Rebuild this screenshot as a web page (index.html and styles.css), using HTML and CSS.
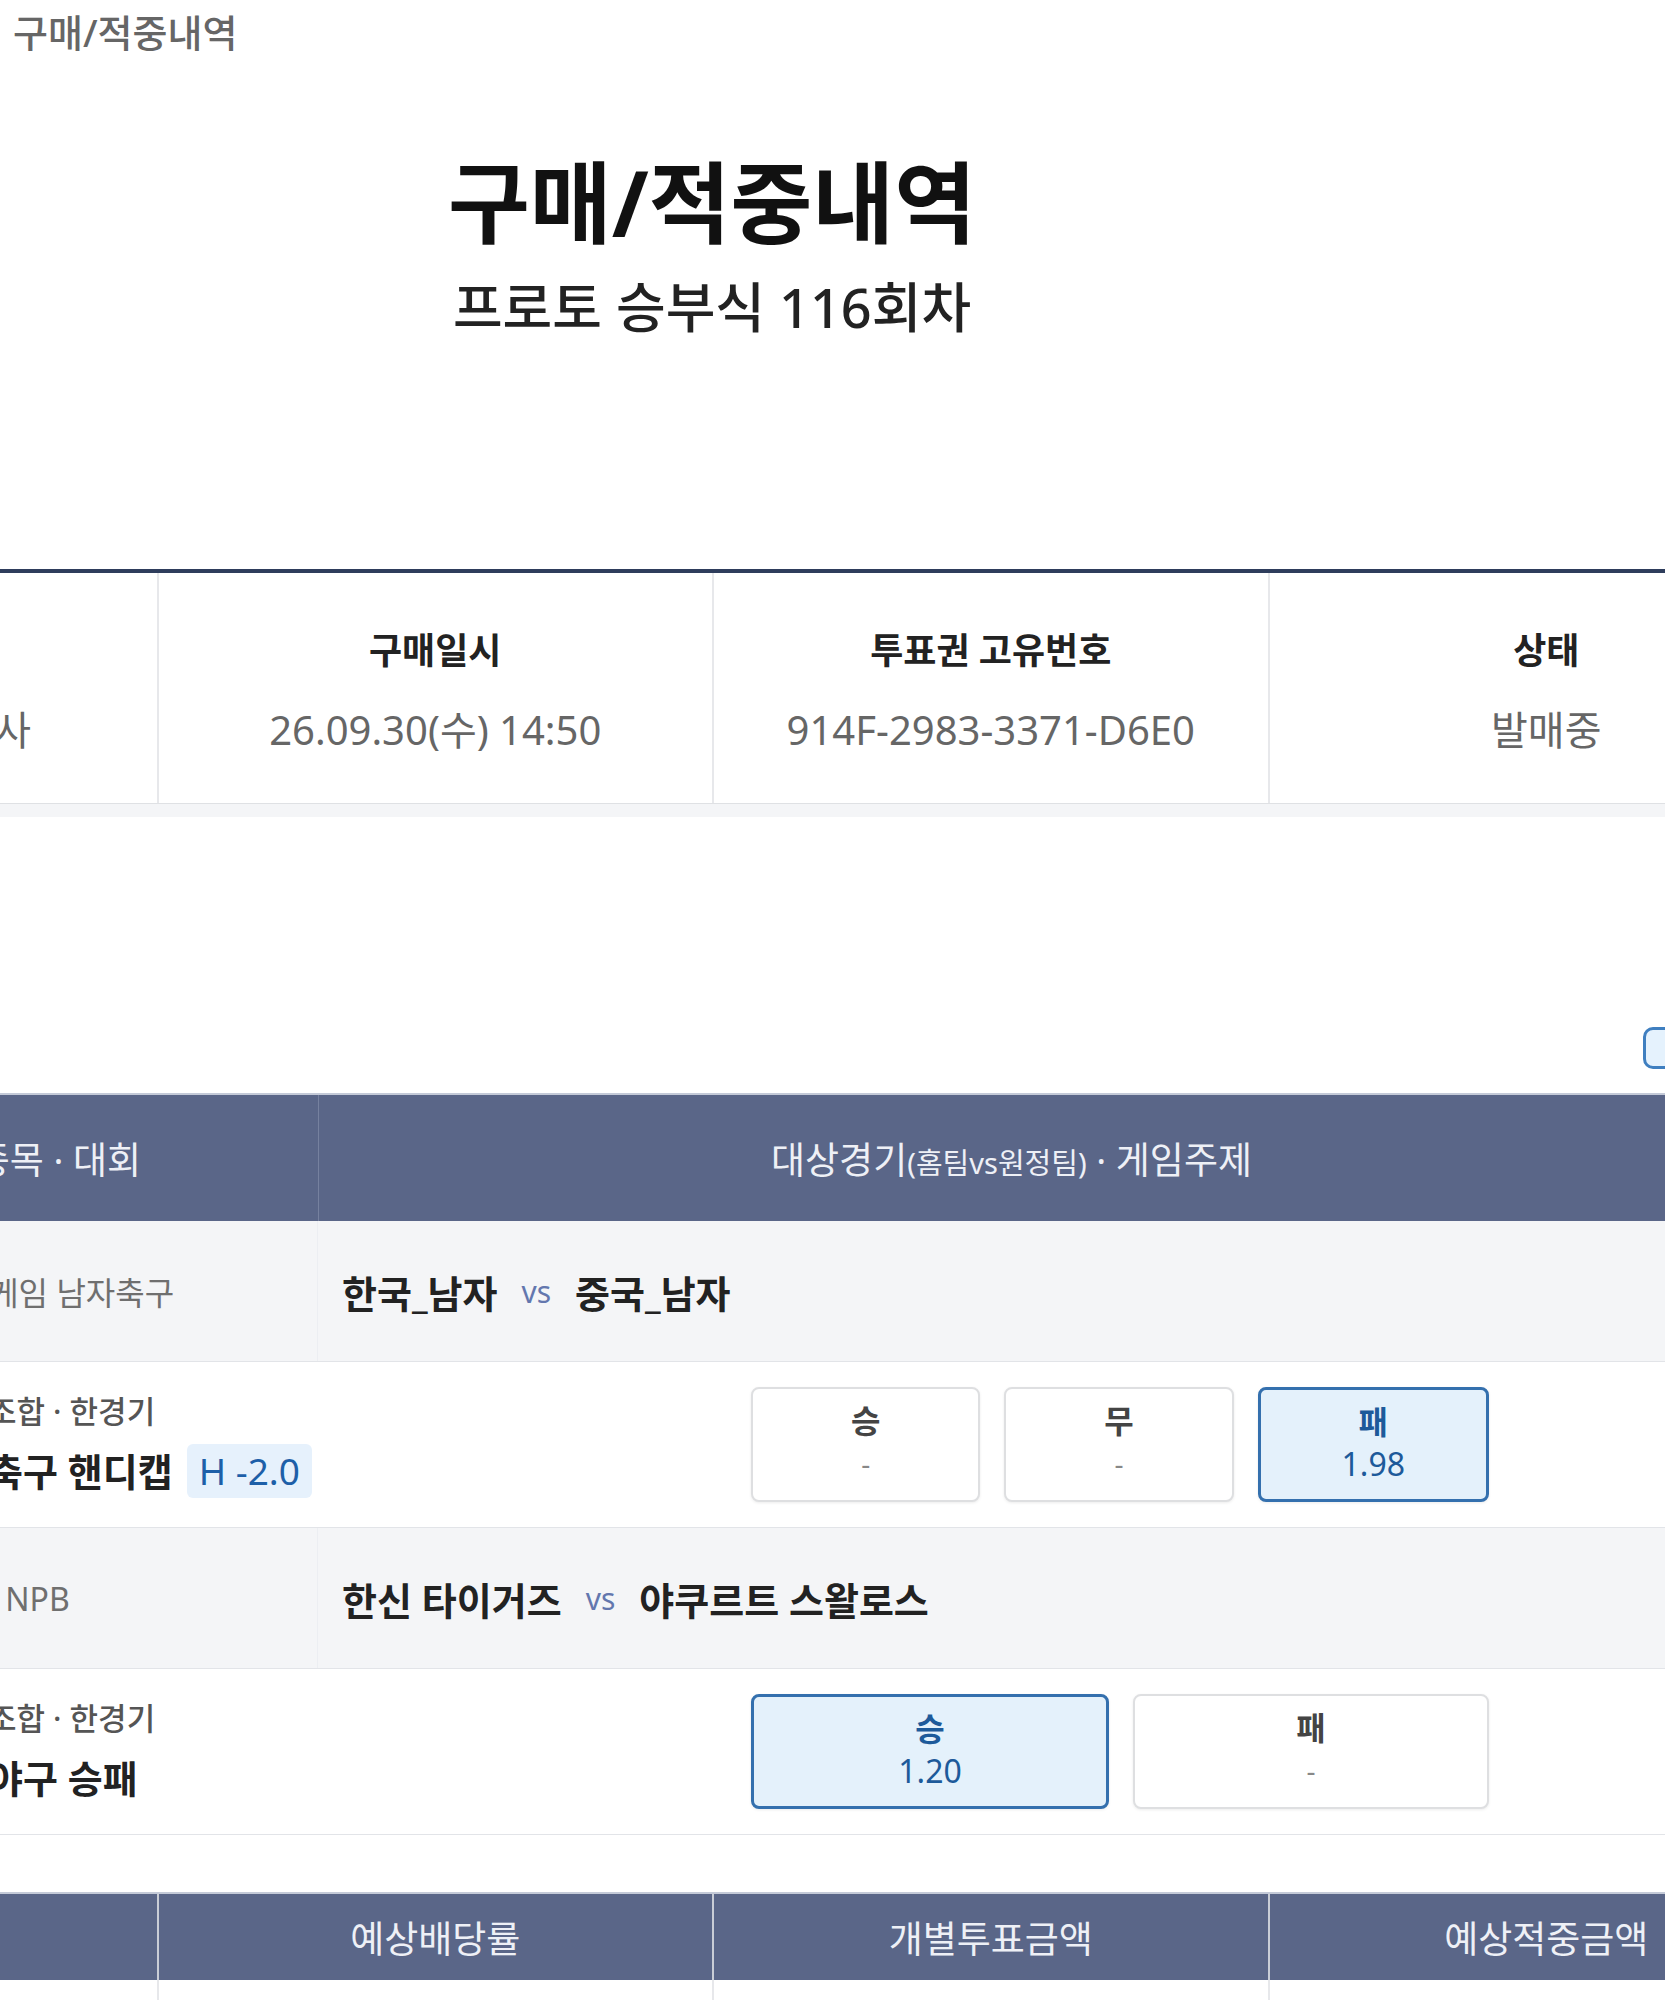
FILE: index.html
```html
<!DOCTYPE html>
<html lang="ko">
<head>
  <meta charset="UTF-8" />
  <meta name="viewport" content="width=device-width, initial-scale=1.0" />
  <title>구매/적중내역</title>
  <link rel="stylesheet" href="styles.css">
</head>
<body>
  <div class="crumb">구매/적중내역</div>

  <div class="wrap">
    <header class="head">
      <h1>구매/적중내역</h1>
      <p class="round">프로토 승부식 116회차</p>
    </header>

    <!-- ticket summary -->
    <div class="summary">
      <div class="cell">
        <strong>구매처</strong>
        <span>온라인 판매대행사</span>
      </div>
      <div class="cell">
        <strong>구매일시</strong>
        <span>26.09.30(수) 14:50</span>
      </div>
      <div class="cell">
        <strong>투표권 고유번호</strong>
        <span>914F-2983-3371-D6E0</span>
      </div>
      <div class="cell">
        <strong>상태</strong>
        <span>발매중</span>
      </div>
    </div>
    <div class="band"></div>

    <div class="tools">
      <button class="btn-mini">전체보기</button>
    </div>

    <!-- picked games -->
    <div class="games">
      <div class="games-head">
        <div><span>번호</span></div>
        <div class="col-league"><span>종목 · 대회</span></div>
        <div><span>대상경기<small>(홈팀vs원정팀)</small> · 게임주제</span></div>
        <div><span>마감</span></div>
      </div>

      <div class="match">
        <div class="no">1</div>
        <div class="league">아시안게임 남자축구</div>
        <div class="teams">
          <b>한국_남자</b><em>vs</em><b>중국_남자</b>
        </div>
        <div></div>
      </div>
      <div class="detail">
        <div></div>
        <div class="info">
          <span class="type">조합 · 한경기</span>
          <span class="name">축구 핸디캡 <i class="tag">H -2.0</i></span>
        </div>
        <div class="picks">
          <div class="pick"><b>승</b><span>-</span></div>
          <div class="pick"><b>무</b><span>-</span></div>
          <div class="pick on"><b>패</b><span>1.98</span></div>
        </div>
        <div></div>
      </div>

      <div class="match">
        <div class="no">2</div>
        <div class="league">NPB</div>
        <div class="teams">
          <b>한신 타이거즈</b><em>vs</em><b>야쿠르트 스왈로스</b>
        </div>
        <div></div>
      </div>
      <div class="detail">
        <div></div>
        <div class="info">
          <span class="type">조합 · 한경기</span>
          <span class="name">야구 승패</span>
        </div>
        <div class="picks">
          <div class="pick on"><b>승</b><span>1.20</span></div>
          <div class="pick"><b>패</b><span>-</span></div>
        </div>
        <div></div>
      </div>
    </div>

    <!-- totals -->
    <div class="totals">
      <div class="totals-head">
        <div>총 구매금액</div>
        <div>예상배당률</div>
        <div>개별투표금액</div>
        <div>예상적중금액</div>
      </div>
      <div class="totals-body">
        <div>5,000원</div>
        <div>2.37배</div>
        <div>5,000원</div>
        <div>11,850원</div>
      </div>
    </div>
  </div>
</body>
</html>
```

FILE: styles.css
```css
html {
  overflow: hidden;
}

body {
  margin: 0;
  font-family: "Noto Sans", "Noto Sans CJK KR", sans-serif;
  color: #222;
  background: #fff;
}

/* === TOP === */
.crumb {
  height: 64px;
  line-height: 64px;
  padding-left: 13px;
  font-size: 38px;
  font-weight: 500;
  color: #666;
}

.wrap {
  width: 2222px;
  margin-left: -399px;
}

.head {
  padding: 86px 0 229px;
  text-align: center;
}

.head h1 {
  margin: 0;
  font-size: 89px;
  line-height: 104px;
  font-weight: 700;
  color: #111;
}

.head .round {
  margin: 20px 0 0;
  font-size: 54px;
  line-height: 66px;
  font-weight: 500;
  color: #222;
}

/* === SUMMARY === */
.summary {
  display: grid;
  grid-template-columns: repeat(4, 1fr);
  border-top: 4px solid #2e3d5c;
  border-bottom: 1px solid #dfe1e4;
}

.summary .cell {
  height: 230px;
  display: flex;
  flex-direction: column;
  align-items: center;
  padding-top: 53px;
  box-sizing: border-box;
  border-left: 2px solid #e7e8eb;
}

.summary .cell:first-child {
  border-left: none;
}

.summary strong {
  font-size: 36px;
  line-height: 50px;
  font-weight: 700;
  color: #222;
}

.summary span {
  margin-top: 29px;
  font-size: 40px;
  line-height: 50px;
  color: #666;
}

.band {
  height: 13px;
  background: #f4f5f7;
}

.tools {
  display: flex;
  justify-content: flex-end;
  margin-top: 210px;
}

.btn-mini {
  width: 150px;
  height: 42px;
  margin-right: 30px;
  padding-left: 30px;
  border: 3px solid #3f7fc0;
  border-radius: 10px;
  background: #e5f2fd;
  color: #1e5a9c;
  font: inherit;
  font-size: 24px;
}

/* === GAMES TABLE === */
.games {
  margin-top: 24px;
}

.games-head,
.match {
  display: grid;
  grid-template-columns: 181px 536px 1386px 1fr;
}

.games-head {
  height: 128px;
  border-top: 2px solid #c4cad8;
  box-sizing: border-box;
  background: #5a6688;
  color: #eef0f6;
  font-size: 37px;
}

.games-head div {
  display: flex;
  align-items: center;
  justify-content: center;
  border-left: 1px solid #76819f;
}

.games-head div:first-child {
  border-left: none;
}

.games-head .col-league {
  padding-left: 16px;
}

.games-head small {
  font-size: 29px;
}

.match {
  height: 140px;
  background: #f4f5f7;
  border-bottom: 1px solid #e2e4e8;
}

.match > div {
  display: flex;
  align-items: center;
}

.match .no {
  justify-content: center;
  color: #777;
  font-size: 30px;
}

.match .league {
  justify-content: center;
  padding-right: 24px;
  font-size: 32px;
  color: #6f6f6f;
  border-right: 1px solid #eceef2;
}

.teams {
  padding-left: 24px;
}

.teams b {
  font-size: 38px;
  font-weight: 700;
  color: #222;
}

.teams em {
  margin: 0 24px;
  font-style: normal;
  font-size: 30px;
  color: #6377ae;
}

.detail {
  display: grid;
  grid-template-columns: 387px 763px 738px 1fr;
  align-items: center;
  height: 166px;
  border-bottom: 1px solid #e2e4e8;
  box-sizing: border-box;
}

.info {
  display: flex;
  flex-direction: column;
  gap: 9px;
}

.info .type {
  font-size: 31px;
  line-height: 44px;
  font-weight: 500;
  color: #555;
}

.info .name {
  display: flex;
  align-items: center;
  font-size: 38px;
  line-height: 58px;
  font-weight: 700;
  color: #222;
}

.tag {
  margin-left: 14px;
  padding: 0 12px;
  border-radius: 6px;
  background: #e6f1fc;
  color: #1d5fa8;
  font-style: normal;
  font-weight: 400;
  font-size: 37px;
  line-height: 54px;
}

.picks {
  display: flex;
  gap: 24px;
}

.pick {
  flex: 1;
  height: 115px;
  display: flex;
  flex-direction: column;
  align-items: center;
  padding-top: 10px;
  box-sizing: border-box;
  border: 2px solid #dedfe1;
  border-radius: 8px;
  box-shadow: 0 1px 3px rgba(0, 0, 0, 0.08);
  background: #fff;
}

.pick b {
  font-size: 32px;
  line-height: 44px;
  color: #444;
}

.pick span {
  font-size: 28px;
  line-height: 40px;
  color: #888;
}

.pick.on {
  border: 3px solid #3470ae;
  background: #e4f1fb;
}

.pick.on b,
.pick.on span {
  color: #1d5a9a;
}

.pick.on span {
  font-size: 32px;
}

/* === TOTALS === */
.totals {
  margin-top: 57px;
}

.totals-head,
.totals-body {
  display: grid;
  grid-template-columns: repeat(4, 1fr);
}

.totals-head {
  height: 88px;
  border-top: 2px solid #c4cad8;
  box-sizing: border-box;
  background: #5a6688;
  color: #eef0f6;
  font-size: 37px;
}

.totals-head div,
.totals-body div {
  display: flex;
  align-items: center;
  justify-content: center;
  border-left: 2px solid #c9cdd6;
}

.totals-body div {
  height: 110px;
  border-left-color: #e7e8eb;
  font-size: 36px;
  color: #444;
}

.totals-head div:first-child,
.totals-body div:first-child {
  border-left: none;
}
```
